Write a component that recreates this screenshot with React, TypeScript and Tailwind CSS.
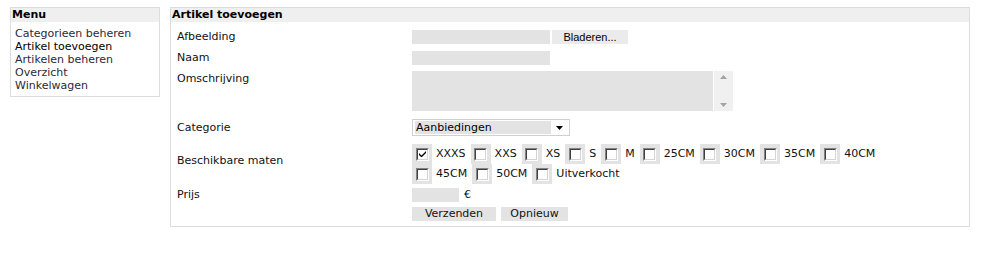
import React from 'react';

// --- Types ---
type Size = { label: string; checked?: boolean };

const menuItems = ['Categorieen beheren', 'Artikel toevoegen', 'Artikelen beheren', 'Overzicht', 'Winkelwagen'];

const sizeRows: Size[][] = [
  [
    { label: 'XXXS', checked: true },
    { label: 'XXS' },
    { label: 'XS' },
    { label: 'S' },
    { label: 'M' },
    { label: '25CM' },
    { label: '30CM' },
    { label: '35CM' },
    { label: '40CM' },
  ],
  [{ label: '45CM' }, { label: '50CM' }, { label: 'Uitverkocht' }],
];

// --- Small widgets ---
function CheckBox({ checked }: { checked?: boolean }) {
  return (
    <span className="flex h-[20px] w-[20px] items-center justify-center bg-[#e3e3e3]">
      <span className="flex h-[13px] w-[13px] border border-t-[#848484] border-l-[#848484] border-b-[#ffffff] border-r-[#ffffff]">
        <span className="flex h-full w-full items-center justify-center border border-t-[#404040] border-l-[#404040] border-b-[#d4d4d4] border-r-[#d4d4d4] bg-white">
          {checked && (
            <svg width="7" height="7" viewBox="0 0 7 7">
              <path d="M0 2 L0 4 L2 6 L3 6 L7 2 L7 0 L2.5 4.5 Z" fill="#000" />
            </svg>
          )}
        </span>
      </span>
    </span>
  );
}

function Row({ label, children, labelClass = 'self-center', className = '' }: { label: string; children: React.ReactNode; labelClass?: string; className?: string }) {
  return (
    <div className={`flex ${className}`}>
      <div className={`w-[241px] shrink-0 pl-[6px] leading-[14px] ${labelClass}`}>{label}</div>
      <div className="flex-1">{children}</div>
    </div>
  );
}

// --- Main Component ---
export default function App() {
  return (
    <div className="flex items-start gap-[10px] px-[10px] pt-[7px] font-['Verdana','DejaVu_Sans',sans-serif] text-[11px] text-[#111]">
      {/* Menu */}
      <div className="w-[150px] border border-[#dddddd]">
        <div className="h-[14px] bg-[#efefef] px-[1px] font-bold leading-[14px] text-black">Menu</div>
        <div className="px-[4px] pt-[5px] pb-[4px] leading-[13px]">
          {menuItems.map((item, i) => (
            <div key={item} className={i === 1 ? 'text-black' : 'text-[#2a2a3a]'}>
              {item}
            </div>
          ))}
        </div>
      </div>

      {/* Form panel */}
      <div className="w-[800px] border border-[#dddddd]">
        <div className="h-[14px] bg-[#efefef] px-[1px] font-bold leading-[14px] text-black">Artikel toevoegen</div>

        <div className="flex flex-col pt-[8px] pb-[5px]">
          <Row label="Afbeelding">
            <div className="flex gap-[2px]">
              <div className="h-[14px] w-[138px] bg-[#e3e3e3]" />
              <div className="flex h-[14px] w-[76px] items-center justify-center bg-[#ebebeb] font-['Liberation_Sans',sans-serif] text-[11px] text-black">
                Bladeren...
              </div>
            </div>
          </Row>

          <Row label="Naam" className="mt-[7px]">
            <div className="h-[14px] w-[138px] bg-[#e3e3e3]" />
          </Row>

          <Row label="Omschrijving" labelClass="self-start pt-[1px]" className="mt-[6px]">
            <div className="flex h-[40px]">
              <div className="w-[301px] bg-[#e3e3e3]" />
              <div className="flex w-[20px] flex-col items-center justify-between border-l border-white bg-[#f0f0f0] py-[4px]">
                <svg width="7" height="4" viewBox="0 0 7 4">
                  <path d="M3.5 0 L7 4 L0 4 Z" fill="#a3a3a3" />
                </svg>
                <svg width="7" height="4" viewBox="0 0 7 4">
                  <path d="M0 0 L7 0 L3.5 4 Z" fill="#a3a3a3" />
                </svg>
              </div>
            </div>
          </Row>

          <Row label="Categorie" className="mt-[8px]">
            <div className="flex h-[17px] w-[158px] items-center border border-[#d0d0d0] bg-white pl-[2px] pr-[6px]">
              <div className="flex h-[13px] w-[136px] items-center bg-[#e3e3e3] pl-[1px] leading-[13px] text-black">Aanbiedingen</div>
              <div className="flex flex-1 justify-end">
                <svg width="7" height="4" viewBox="0 0 7 4">
                  <path d="M0 0 L7 0 L3.5 4 Z" fill="#000" />
                </svg>
              </div>
            </div>
          </Row>

          <Row label="Beschikbare maten" labelClass="self-start pt-[10px]" className="mt-[8px]">
            <div className="flex flex-col">
              {sizeRows.map((row, r) => (
                <div key={r} className="flex items-center gap-[5px]">
                  {row.map((s) => (
                    <div key={s.label} className="flex items-center gap-[4px]">
                      <CheckBox checked={s.checked} />
                      <span className="leading-[14px]">{s.label}</span>
                    </div>
                  ))}
                </div>
              ))}
            </div>
          </Row>

          <Row label="Prijs" className="mt-[4px]">
            <div className="flex items-center gap-[5px]">
              <div className="h-[14px] w-[47px] bg-[#e3e3e3]" />
              <span className="leading-[14px]">€</span>
            </div>
          </Row>

          <Row label="" className="mt-[5px]">
            <div className="flex gap-[5px]">
              <div className="flex h-[14px] w-[84px] items-center justify-center bg-[#e3e3e3] leading-[14px]">Verzenden</div>
              <div className="flex h-[14px] w-[67px] items-center justify-center bg-[#e3e3e3] leading-[14px]">Opnieuw</div>
            </div>
          </Row>
        </div>
      </div>
    </div>
  );
}
